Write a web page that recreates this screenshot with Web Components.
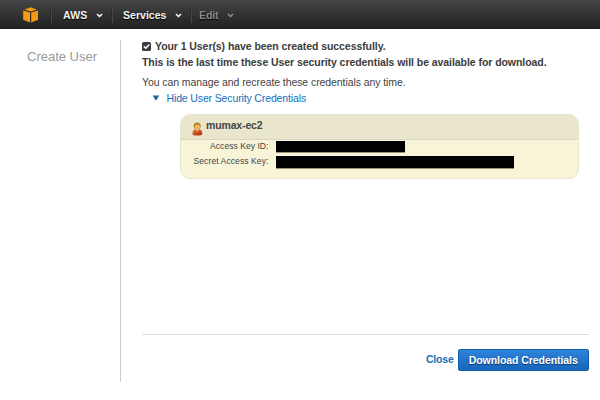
<!DOCTYPE html>
<html lang="en"><head><meta charset="utf-8"><title>Create User</title>
<style>html,body{margin:0;width:600px;height:400px;overflow:hidden;background:#fff;font-family:"Liberation Sans",Arial,sans-serif;color:#444}</style></head>
<body><iam-page></iam-page>
<script>
const define=(name,html)=>customElements.define(name,class extends HTMLElement{
  constructor(){super();this.attachShadow({mode:'open'}).innerHTML=html;}
});
// Text line whose tracking is set so that it spans the width given in its "w" attribute.
customElements.define('text-run',class extends HTMLElement{
  constructor(){super();this.attachShadow({mode:'open'}).innerHTML='<style>:host{display:block;white-space:nowrap;flex:none}span{display:inline-block}</style><span><slot></slot></span>';}
  connectedCallback(){
    const w=+this.getAttribute('w'),s=this.shadowRoot.querySelector('span');
    this.style.width=w+'px';
    const n=this.textContent.length;
    s.style.letterSpacing=((w-s.getBoundingClientRect().width)/n)+'px';
  }
});
define('aws-cube',`<style>:host{display:block;width:16px;height:16px}svg{display:block}</style>
<svg width="16" height="16" viewBox="0 0 16 16" fill="#f8990f"><path d="M1.6 2.5 7.6.2l6 2.3-6 1.9zM.2 3.4l6.8 2.2v9.8L.2 12.8zM15 3.4 8.2 5.6v9.8l6.8-2.6z"/></svg>`);
define('nav-chevron',`<style>:host{display:block;width:7px;height:5px}svg{display:block}</style>
<svg width="7" height="5" viewBox="0 0 7 5"><path d="M.9 1 3.5 3.4 6.1 1" fill="none" stroke="currentColor" stroke-width="1.5"/></svg>`);
define('nav-item',`<style>:host{display:flex;align-items:center;box-sizing:border-box;height:16px;border-left:1px solid #474747;box-shadow:-1px 0 #2a2a2a;font:bold 10.5px/16px "Liberation Sans";color:#f4f4f4;text-shadow:0 1px 1px #000}:host([dim]){color:#8d8b86}nav-chevron{margin-top:1px}</style><slot></slot><nav-chevron></nav-chevron>`);
define('nav-bar',`<style>:host{display:flex;height:29px;box-sizing:border-box;padding:7px 0 0 23px;background:linear-gradient(#454545,#202020)}
aws-cube{margin:0 12px 0 0}nav-item{flex:none;box-sizing:border-box}</style>
<aws-cube></aws-cube><nav-item style="width:61px;padding-left:11px;gap:8px"><text-run w="24.5">AWS</text-run></nav-item>
<nav-item style="width:79px;padding-left:10px;gap:8px"><text-run w="43.5">Services</text-run></nav-item>
<nav-item dim style="width:60px;padding-left:7px;gap:8px"><text-run w="19.5">Edit</text-run></nav-item>`);
define('check-icon',`<style>:host{display:block;width:9px;height:9px}svg{display:block}</style>
<svg width="9" height="9" viewBox="0 0 9 9"><rect width="9" height="9" rx="1.6" fill="#3d3d3d"/><path d="M1.8 4.4 3.8 6.3 7.3 2.5" fill="none" stroke="#fff" stroke-width="1.5"/></svg>`);
define('user-icon',`<style>:host{display:block;width:11px;height:14px}svg{display:block}</style>
<svg width="11" height="14" viewBox="0 0 11 14"><defs><linearGradient id="b" x2="1" y2="1"><stop stop-color="#e87a3c"/><stop offset="1" stop-color="#a82808"/></linearGradient></defs>
<path d="M.4 12Q.4 7.6 3.5 7.3h3.7q3 .8 3.1 4.7-.4 1.5-5 1.5T.4 12z" fill="url(#b)"/><path d="M3.8 7 5.5 9.5 7.1 7z" fill="#ffd9a0"/><ellipse cx="5.2" cy="4" rx="3.5" ry="3.6" fill="#b3830d"/><ellipse cx="5.4" cy="5" rx="2.6" ry="2.6" fill="#f5b26b"/></svg>`);
define('credential-row',`<style>:host{display:flex;height:15px;font:8.6px/13px "Liberation Sans";color:#444}.l{width:87.5px;display:flex;justify-content:flex-end;margin-right:7.5px}.m{height:var(--h);width:var(--w);background:#000;border:solid #999779;border-width:0 0 1px;box-sizing:border-box;margin-top:1px}</style><div class="l"><slot></slot></div><div class="m"></div>`);
define('credential-card',`<style>:host{display:block;box-sizing:border-box;width:399px;height:65px;border:1px solid #e9e6cb;border-radius:10px;background:#f8f4d8;overflow:hidden}
header{display:flex;box-sizing:border-box;height:25px;border-bottom:1px solid #d8d5c6;background:#eae6ce;padding:0 0 0 11px;gap:3px;font:bold 10.5px/21px "Liberation Sans"}user-icon{margin-top:7px}</style>
<header><user-icon></user-icon><text-run w="56.5">mumax-ec2</text-run></header>
<credential-row style="--w:129px;--h:12px"><text-run w="58.5">Access Key ID:</text-run></credential-row>
<credential-row style="--w:238px;--h:13px"><text-run w="75">Secret Access Key:</text-run></credential-row>`);
define('blue-button',`<style>:host{display:flex;justify-content:center;box-sizing:border-box;width:130.5px;height:22px;border:1px solid #145fae;border-radius:2px;background:linear-gradient(#2e83db,#1765b8);font:bold 10.5px/21px "Liberation Sans";color:#fff;text-shadow:0 1px 1px #073768}</style><slot></slot>`);
define('iam-page',`<style>:host{display:block}.body{display:flex}
aside{box-sizing:border-box;width:121px;height:342px;margin-top:11px;border-right:1px solid #ccc;padding:8px 0 0 27px;font-size:13px;line-height:18px;color:#999}
main{width:446.5px;margin:9px 0 0 21px;font-size:10.5px;line-height:16px}.b{font-weight:bold;color:#3c3c3c}
.s{display:flex;align-items:center;gap:4px}.p{margin-top:4px}.t{display:flex;align-items:center;gap:6.5px;padding-left:10px;color:#1070bd}
credential-card{margin:8px 0 0 38px}footer{display:flex;justify-content:flex-end;gap:4.5px;margin-top:155px;padding-top:14px;border-top:1px solid #ddd}
.c{font-weight:bold;color:#176fb4;line-height:21px}.t svg{display:block}</style>
<nav-bar></nav-bar><div class="body"><aside><text-run w="70">Create User</text-run></aside>
<main><div class="s b"><check-icon></check-icon><text-run w="230.5">Your 1 User(s) have been created successfully.</text-run></div>
<text-run class="b" w="404.5">This is the last time these User security credentials will be available for download.</text-run>
<text-run class="p" w="263.5">You can manage and recreate these credentials any time.</text-run>
<div class="t"><svg width="8" height="6" viewBox="0 0 8 6"><path d="M.6.6h6.6L3.9 5.7z" fill="#1d67a0"/></svg><text-run w="139.5">Hide User Security Credentials</text-run></div>
<credential-card></credential-card>
<footer><text-run class="c" w="27.5">Close</text-run><blue-button><text-run w="109">Download Credentials</text-run></blue-button></footer></main></div>`);
</script></body></html>
